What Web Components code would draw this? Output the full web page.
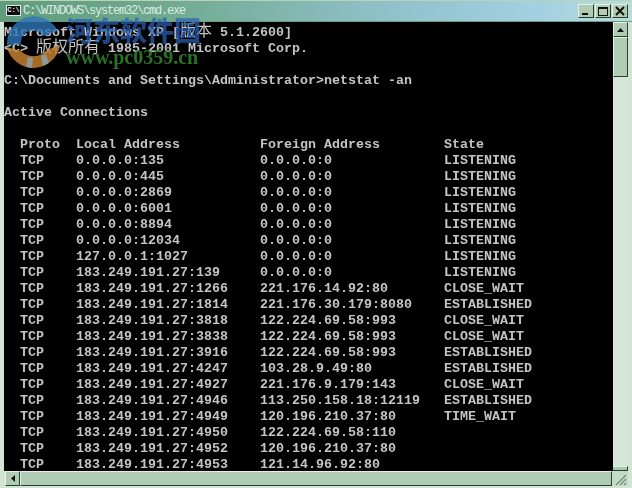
<!DOCTYPE html>
<html>
<head>
<meta charset="utf-8">
<style>
html, body { margin: 0; padding: 0; background: #d3e4d6; }
</style>
</head>
<body>
<cmd-window></cmd-window>
<script>
const LINES = [
  'Microsoft Windows XP [版本 5.1.2600]',
  '<C> 版权所有 1985-2001 Microsoft Corp.',
  '',
  'C:\\Documents and Settings\\Administrator>netstat -an',
  '',
  'Active Connections',
  '',
  '  Proto  Local Address          Foreign Address        State',
  '  TCP    0.0.0.0:135            0.0.0.0:0              LISTENING',
  '  TCP    0.0.0.0:445            0.0.0.0:0              LISTENING',
  '  TCP    0.0.0.0:2869           0.0.0.0:0              LISTENING',
  '  TCP    0.0.0.0:6001           0.0.0.0:0              LISTENING',
  '  TCP    0.0.0.0:8894           0.0.0.0:0              LISTENING',
  '  TCP    0.0.0.0:12034          0.0.0.0:0              LISTENING',
  '  TCP    127.0.0.1:1027         0.0.0.0:0              LISTENING',
  '  TCP    183.249.191.27:139     0.0.0.0:0              LISTENING',
  '  TCP    183.249.191.27:1266    221.176.14.92:80       CLOSE_WAIT',
  '  TCP    183.249.191.27:1814    221.176.30.179:8080    ESTABLISHED',
  '  TCP    183.249.191.27:3818    122.224.69.58:993      CLOSE_WAIT',
  '  TCP    183.249.191.27:3838    122.224.69.58:993      CLOSE_WAIT',
  '  TCP    183.249.191.27:3916    122.224.69.58:993      ESTABLISHED',
  '  TCP    183.249.191.27:4247    103.28.9.49:80         ESTABLISHED',
  '  TCP    183.249.191.27:4927    221.176.9.179:143      CLOSE_WAIT',
  '  TCP    183.249.191.27:4946    113.250.158.18:12119   ESTABLISHED',
  '  TCP    183.249.191.27:4949    120.196.210.37:80      TIME_WAIT',
  '  TCP    183.249.191.27:4950    122.224.69.58:110',
  '  TCP    183.249.191.27:4952    120.196.210.37:80',
  '  TCP    183.249.191.27:4953    121.14.96.92:80'
]

// one arrow / window button in the classic xp style
class XpButton extends HTMLElement {
  constructor () {
    super()
    this.attachShadow({ mode: 'open' })
    this.shadowRoot.innerHTML = `
<style>
:host {
  display: flex;
  align-items: center;
  justify-content: center;
  box-sizing: border-box;
  flex: none;
  width: var(--w, 15px);
  height: var(--h, 15px);
  background: #b0cdb4;
  border: 1px solid;
  border-color: #e6f1e6 #2b3d31 #2b3d31 #e6f1e6;
}
svg { display: block; }
</style>
<slot></slot>`
  }
}

class TitleBar extends HTMLElement {
  constructor () {
    super()
    this.attachShadow({ mode: 'open' })
    this.shadowRoot.innerHTML = `
<style>
:host {
  display: flex;
  align-items: center;
  flex: none;
  height: 22px;
  box-sizing: border-box;
  padding: 1px 4px 2px 6px;
  background: linear-gradient(90deg, #5f9c7c 0%, #6fa98d 25%, #8fc0c8 60%, #a3d0e2 85%, #b9dcd8 100%);
  border-top: 1px solid #b9d2ba;
  border-bottom: 1px solid #6e9a80;
  color: #dceae6;
  font: 12px "Liberation Mono", monospace;
}
.icon {
  flex: none;
  width: 15px;
  height: 11px;
  margin-right: 2px;
  background: #0c0c0c;
  border: 1px solid #dfe8e0;
  box-sizing: border-box;
  color: #eee;
  font: bold 7px/9px "Liberation Mono", monospace;
  text-align: center;
}
.name { flex: 1; white-space: pre; letter-spacing: -1.2px; }
.btns { display: flex; gap: 1px; align-items: center; }
.btns xp-button { --w: 16px; --h: 14px; }
</style>
<div class="icon">C:\\</div>
<div class="name">C:\\WINDOWS\\system32\\cmd.exe</div>
<div class="btns">
  <xp-button><svg width="10" height="10"><rect x="1" y="7" width="6" height="2" fill="#111"/></svg></xp-button>
  <xp-button><svg width="12" height="10"><rect x="1.5" y="1.5" width="9" height="8" fill="none" stroke="#111"/><rect x="1" y="1" width="10" height="2" fill="#111"/></svg></xp-button>
  <xp-button><svg width="10" height="10"><path d="M1 1l8 8M9 1l-8 8" stroke="#111" stroke-width="2"/></svg></xp-button>
</div>`
  }
}

class ConsoleView extends HTMLElement {
  constructor () {
    super()
    this.attachShadow({ mode: 'open' })
    this.shadowRoot.innerHTML = `
<style>
:host {
  display: block;
  flex: 1;
  min-width: 0;
  position: relative;
  overflow: hidden;
  background: #000;
  color: #c4c4c4;
  font: bold 13.33px/16px "Liberation Mono", "Noto Sans CJK SC", monospace;
}
pre { margin: 0; padding: 3px 0 0 0; font: inherit; white-space: pre; filter: blur(.3px); }
.line { height: 16px; }
.cjk { font: 400 16px/0 "Noto Sans CJK SC", sans-serif; }
</style>
<pre></pre>
<slot></slot>`
    const pre = this.shadowRoot.querySelector('pre')
    LINES.forEach((text) => {
      const row = document.createElement('div')
      row.className = 'line'
      // the chinese runs take two cells per glyph, so they get their own size
      text.split(/([\u4e00-\u9fff]+)/).forEach((part, i) => {
        if (i % 2) {
          const span = document.createElement('span')
          span.className = 'cjk'
          span.textContent = part
          row.appendChild(span)
        } else {
          row.appendChild(document.createTextNode(part))
        }
      })
      pre.appendChild(row)
    })
  }
}

// the site watermark that lies over the top left corner of the window
class SiteMark extends HTMLElement {
  constructor () {
    super()
    this.attachShadow({ mode: 'open' })
    this.shadowRoot.innerHTML = `
<style>
:host { display: block; position: absolute; left: 0; top: 0; width: 210px; height: 72px; pointer-events: none; }
svg { position: absolute; left: 5px; top: 14px; opacity: .8; }
.cn {
  position: absolute; left: 66px; top: 12px;
  font: 900 27px/36px "Noto Sans CJK SC", sans-serif;
  color: #2a62b4;
  opacity: .72;
  white-space: nowrap;
}
.url {
  position: absolute; left: 66px; top: 46px;
  font: bold 20px/22px "Liberation Serif", serif;
  color: #2f7d2a;
  opacity: .9;
  white-space: nowrap;
}
</style>
<svg width="60" height="54" viewBox="0 0 60 54">
  <path d="M2 28A27 27 0 0 1 53 17L38 22A12 12 0 0 0 16 30L2 31Z" fill="#2f76b8"/>
  <path d="M2 33L16 37C22 44 36 44 42 36L55 31A27 27 0 0 1 2 33Z" fill="#cf8733"/>
  <path d="M23 43l-2 10 6 1 1-10ZM36 42l2 10 6-3-3-9Z" fill="#b9bcb8"/>
</svg>
<div class="cn">河东软件园</div>
<div class="url">www.pc0359.cn</div>`
  }
}

class CmdWindow extends HTMLElement {
  constructor () {
    super()
    this.attachShadow({ mode: 'open' })
    this.shadowRoot.innerHTML = `
<style>
:host {
  display: flex;
  flex-direction: column;
  position: relative;
  box-sizing: border-box;
  width: 632px;
  height: 488px;
  background: #d3e4d6;
}
.main { display: flex; flex: 1; min-height: 0; padding: 0 4px; }
.vbar { display: flex; flex-direction: column; flex: none; width: 15px; background: #d6e6d8; }
.thumb { --h: 40px; }
.spacer { flex: 1; }
.down { height: 5px; background: #a9c6ae; border-top: 1px solid #e6f1e6; border-right: 1px solid #2b3d31; border-bottom: 1px solid #2b3d31; box-sizing: border-box; }
.bottom { display: flex; flex: none; height: 15px; margin: 0 4px 2px 5px; }
.track { flex: 1; display: flex; min-width: 0; }
.hthumb { --w: 100%; }
.corner { flex: none; width: 16px; background: #c4dbc7; }
svg.grip { display: block; }
</style>
<title-bar></title-bar>
<div class="main">
  <console-view></console-view>
  <div class="vbar">
    <xp-button><svg width="7" height="4"><path d="M3.5 0L7 4H0Z" fill="#111"/></svg></xp-button>
    <xp-button class="thumb"></xp-button>
    <div class="spacer"></div>
    <div class="down"></div>
  </div>
</div>
<div class="bottom">
  <xp-button><svg width="4" height="7"><path d="M0 3.5L4 0V7Z" fill="#111"/></svg></xp-button>
  <div class="track"><xp-button class="hthumb"></xp-button></div>
  <div class="corner"><svg class="grip" width="16" height="15"><path d="M4 14L14 4M8 14L14 8M12 14L14 12" stroke="#6f8f78" stroke-width="1.2"/></svg></div>
</div>
<site-mark></site-mark>`
  }
}

window.customElements.define('xp-button', XpButton)
window.customElements.define('title-bar', TitleBar)
window.customElements.define('console-view', ConsoleView)
window.customElements.define('site-mark', SiteMark)
window.customElements.define('cmd-window', CmdWindow)
</script>
</body>
</html>
